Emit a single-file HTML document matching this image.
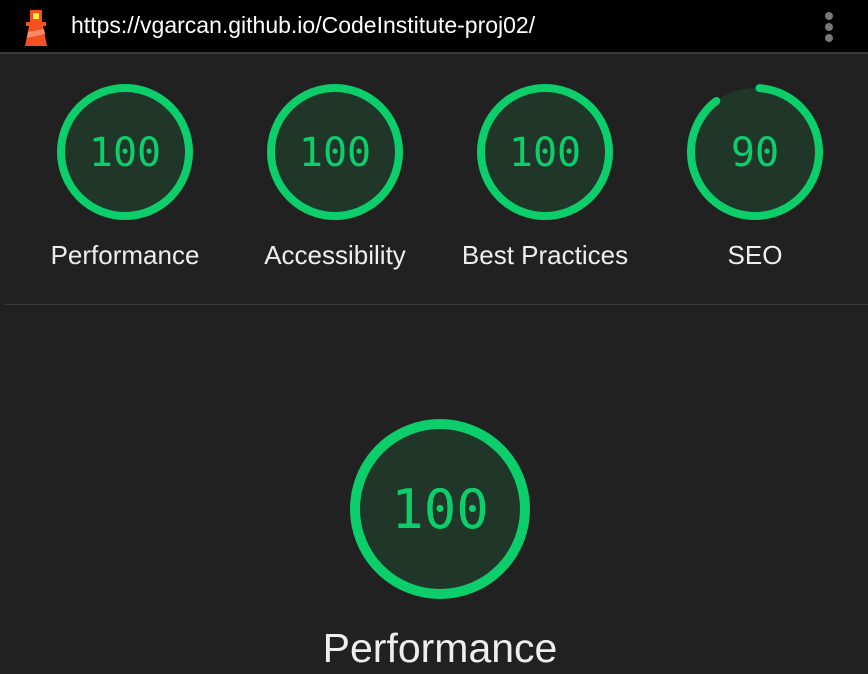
<!DOCTYPE html><html><head><style>
body{margin:0;width:868px;height:674px;background:#212121;overflow:hidden;font-family:"Liberation Sans",sans-serif;position:relative}
.top{position:absolute;left:0;top:0;width:868px;height:52px;background:#000;border-bottom:2px solid #3a3a3a;box-sizing:content-box}
.url{position:absolute;left:71px;top:12px;color:#fff;font-size:23px}
.dots{position:absolute;left:825px;top:12px}
.dots i{display:block;width:8px;height:8px;border-radius:50%;background:#777;margin-bottom:3px}
.lbl{position:absolute;color:#eee;font-size:26px;width:220px;text-align:center}
.sep{position:absolute;left:4px;right:0;top:304px;height:1px;background:#3a3a3a}
.num{font-family:"DejaVu Sans Mono","Liberation Mono",monospace;fill:#0cce6b}
</style></head><body>
<div class="top">
<svg style="position:absolute;left:22px;top:8px" width="28" height="38" viewBox="0 0 28 38">
<rect x="8" y="2" width="12" height="12" fill="#f4511e"/><rect x="11" y="5" width="6" height="6" fill="#ffeb3b"/>
<rect x="4" y="14" width="20" height="4" fill="#f4511e"/>
<polygon points="7,18 21,18 25,38 3,38" fill="#f4511e"/>
<polygon points="6,24 22,21 23,26 5,30" fill="#ff8a65"/>
</svg>
<div class="url">https://vgarcan.github.io/CodeInstitute-proj02/</div>
<div class="dots"><i></i><i></i><i></i></div>
</div>
<svg style="position:absolute;left:0;top:0" width="868" height="674">
<g>
<circle cx="125" cy="152" r="64" fill="#1f3629" stroke="#0cce6b" stroke-width="8"/>
<text x="125" y="166" text-anchor="middle" font-size="40" class="num">100</text>
<circle cx="335" cy="152" r="64" fill="#1f3629" stroke="#0cce6b" stroke-width="8"/>
<text x="335" y="166" text-anchor="middle" font-size="40" class="num">100</text>
<circle cx="545" cy="152" r="64" fill="#1f3629" stroke="#0cce6b" stroke-width="8"/>
<text x="545" y="166" text-anchor="middle" font-size="40" class="num">100</text>
<circle cx="755" cy="152" r="64" fill="#1f3629"/>
<circle cx="755" cy="152" r="64" fill="none" stroke="#0cce6b" stroke-width="8" stroke-linecap="round" stroke-dasharray="356 500" transform="rotate(-86 755 152)"/>
<text x="755" y="166" text-anchor="middle" font-size="40" class="num">90</text>
<circle cx="440" cy="509" r="85" fill="#1f3629" stroke="#0cce6b" stroke-width="10"/>
<text x="440" y="528" text-anchor="middle" font-size="54" class="num">100</text>
</g></svg>
<div class="lbl" style="left:15px;top:240px">Performance</div>
<div class="lbl" style="left:225px;top:240px">Accessibility</div>
<div class="lbl" style="left:435px;top:240px">Best Practices</div>
<div class="lbl" style="left:645px;top:240px">SEO</div>
<div class="sep"></div>
<div class="lbl" style="left:290px;width:300px;top:625px;font-size:41px">Performance</div>
</body></html>
